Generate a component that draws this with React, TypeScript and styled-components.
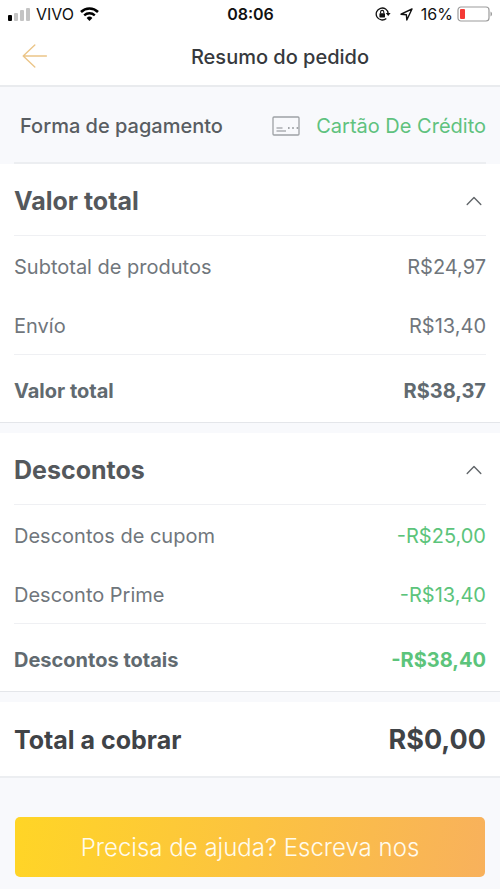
import React, { useState } from "react";
import styled, { createGlobalStyle } from "styled-components";

const GlobalStyle = createGlobalStyle`
  *, *::before, *::after { box-sizing: border-box; }
  body {
    margin: 0;
    background: #f8f9fc;
    color: #5f666c;
    font-family: Inter, "Liberation Sans", sans-serif;
  }
  button { font: inherit; color: inherit; }
  h1, h2, dl, dt, dd { margin: 0; font: inherit; }
`;

const Page = styled.div`
  display: flex;
  flex-direction: column;
  min-height: 100vh;
`;

const StatusBar = styled.div`
  display: grid;
  grid-template-columns: 1fr auto 1fr;
  align-items: center;
  height: 28px;
  padding: 0 7px 0 8px;
  background: #fff;
  color: #111;
  font-size: 16px;
  line-height: 20px;
`;

const StatusGroup = styled.div<{ $end?: boolean }>`
  display: flex;
  align-items: center;
  justify-content: ${(p) => (p.$end ? "flex-end" : "flex-start")};
  gap: ${(p) => (p.$end ? 4 : 6)}px;
  svg { flex: none; }
`;

const Clock = styled.time`
  font-weight: 600;
`;

const StatusIcons = styled.span`
  display: flex;
  align-items: center;
  gap: 9px;
  margin-right: 4px;
`;

const Header = styled.header`
  display: grid;
  grid-template-columns: 60px 1fr;
  align-items: center;
  height: 59px;
  background: #fff;
  border-bottom: 2px solid #e9ebee;
`;

const BackButton = styled.button`
  display: flex;
  justify-content: flex-end;
  padding: 0 12px 2px 0;
  border: 0;
  background: none;
  cursor: pointer;
`;

const PageTitle = styled.h1`
  text-align: center;
  color: #36393d;
  font-size: 20px;
  font-weight: 500;
  line-height: 28px;
`;

const Payment = styled.section`
  display: flex;
  align-items: center;
  justify-content: space-between;
  height: 77px;
  margin: 0 14px;
  padding: 2px 0 0 6px;
  border-bottom: 2px solid #eceef1;
  font-size: 20px;
  line-height: 28px;
`;

const PaymentLabel = styled.h2`
  color: #585d62;
  font-weight: 500;
`;

const PaymentMethod = styled.div`
  display: flex;
  align-items: center;
  gap: 16px;
  color: #5fc27e;
`;

const Panel = styled.section`
  padding: 0 14px;
  background: #fff;
  border-bottom: 1px solid #e4e6ea;
  & + & { margin-top: 10px; }
`;

const PanelToggle = styled.button`
  display: flex;
  align-items: center;
  justify-content: space-between;
  width: 100%;
  height: 71px;
  padding: 2px 4px 0 0;
  border: 0;
  background: none;
  color: #54585c;
  font-size: 25px;
  font-weight: 700;
  line-height: 32px;
  cursor: pointer;
`;

const Chevron = styled.svg<{ $open: boolean }>`
  rotate: ${(p) => (p.$open ? "0deg" : "180deg")};
`;

const Lines = styled.dl`
  border-top: 1px solid #eff0f3;
`;

const Line = styled.div<{ $total?: boolean }>`
  display: flex;
  align-items: center;
  justify-content: space-between;
  height: ${(p) => (p.$total ? 68 : 59)}px;
  padding-top: ${(p) => (p.$total ? 4 : 2)}px;
  border-top: ${(p) => (p.$total ? "1px solid #eff0f3" : "0")};
  color: ${(p) => (p.$total ? "#616a70" : "#70767c")};
  font-size: 20px;
  font-weight: ${(p) => (p.$total ? 700 : 400)};
  line-height: 28px;
`;

const Amount = styled.dd<{ $discount?: boolean }>`
  color: ${(p) => (p.$discount ? "#5cc47b" : "inherit")};
`;

const Charge = styled.dl`
  display: flex;
  align-items: center;
  justify-content: space-between;
  height: 76px;
  margin-top: 10px;
  padding: 2px 14px 0;
  background: #fff;
  border-bottom: 2px solid #eceef1;
  color: #404347;
  font-size: 25px;
  font-weight: 700;
  line-height: 32px;
`;

const ChargeAmount = styled.dd`
  font-size: 27px;
`;

const Footer = styled.footer`
  padding: 39px 15px 12px;
`;

const HelpButton = styled.button`
  display: block;
  width: 100%;
  height: 60px;
  border: 0;
  border-radius: 5px;
  background: linear-gradient(100deg, #ffd526 0%, #fcc340 50%, #f8b15c 100%);
  color: #fffbed;
  font-size: 24px;
  font-weight: 300;
  cursor: pointer;
`;

type Entry = { label: string; value: string };

type SummaryProps = {
  title: string;
  entries: Entry[];
  total: Entry;
  discount?: boolean;
};

function Summary({ title, entries, total, discount }: SummaryProps) {
  const [open, setOpen] = useState(true);
  return (
    <Panel>
      <h2>
        <PanelToggle aria-expanded={open} onClick={() => setOpen(!open)}>
          {title}
          <Chevron $open={open} width="16" height="10" viewBox="0 0 16 10" fill="none" aria-hidden="true">
            <path d="M1.2 8.6 8 1.6l6.8 7" stroke="#62666a" strokeWidth="1.4" strokeLinecap="round" strokeLinejoin="round" />
          </Chevron>
        </PanelToggle>
      </h2>
      {open && (
        <Lines>
          {entries.map((e) => (
            <Line key={e.label}>
              <dt>{e.label}</dt>
              <Amount $discount={discount}>{e.value}</Amount>
            </Line>
          ))}
          <Line $total>
            <dt>{total.label}</dt>
            <Amount $discount={discount}>{total.value}</Amount>
          </Line>
        </Lines>
      )}
    </Panel>
  );
}

function Signal() {
  return (
    <svg width="22" height="14" viewBox="0 0 22 14" aria-hidden="true">
      <rect x="0" y="8" width="4" height="6" rx="1" fill="#000" />
      <rect x="6" y="6" width="4" height="8" rx="1" fill="#c4c4c4" />
      <rect x="12" y="3" width="4" height="11" rx="1" fill="#c4c4c4" />
      <rect x="18" y="1" width="4" height="13" rx="1" fill="#c4c4c4" />
    </svg>
  );
}

function Wifi() {
  return (
    <svg width="19" height="14" viewBox="0 0 19 14" fill="none" stroke="#000" aria-hidden="true">
      <path d="M1 5a12.2 12.2 0 0 1 17 0" strokeWidth="2.6" />
      <path d="M4.2 8.4a7.6 7.6 0 0 1 10.6 0" strokeWidth="2.3" />
      <path d="M9.5 14 6.6 11a4.2 4.2 0 0 1 5.8 0z" fill="#000" stroke="none" />
    </svg>
  );
}

function RotationLock() {
  return (
    <svg width="16" height="14" viewBox="0 0 16 14" fill="none" stroke="#111" aria-hidden="true">
      <path d="M13.2 6.6A6 6 0 1 0 11.3 11.4" strokeWidth="1.3" />
      <path d="M10.8 6h4.8l-2.4 3z" fill="#111" stroke="none" />
      <rect x="4.4" y="6.2" width="5.6" height="4.2" rx=".6" fill="#111" stroke="none" />
      <path d="M5.6 6.4V5a1.6 1.6 0 0 1 3.2 0v1.4" strokeWidth="1.1" />
    </svg>
  );
}

function Location() {
  return (
    <svg width="13" height="13" viewBox="0 0 13 13" fill="none" aria-hidden="true">
      <path d="M12 1 1 6.2l5.4.5.4 5.3z" stroke="#111" strokeWidth="1.4" strokeLinejoin="round" />
    </svg>
  );
}

function Battery() {
  return (
    <svg width="36" height="16" viewBox="0 0 36 16" fill="none" aria-hidden="true">
      <rect x="1" y="1" width="31" height="14" rx="3" stroke="#9b9b9b" strokeWidth="1.2" />
      <rect x="3" y="3" width="5" height="10" rx="1" fill="#f43a36" />
      <path d="M33.5 5.5c2 .8 2 4.2 0 5z" fill="#9b9b9b" />
    </svg>
  );
}

export default function App() {
  return (
    <>
      <GlobalStyle />
      <Page>
        <StatusBar>
          <StatusGroup>
            <Signal />
            <span>VIVO</span>
            <Wifi />
          </StatusGroup>
          <Clock>08:06</Clock>
          <StatusGroup $end>
            <StatusIcons>
              <RotationLock />
              <Location />
            </StatusIcons>
            <span>16%</span>
            <Battery />
          </StatusGroup>
        </StatusBar>
        <Header>
          <BackButton aria-label="Voltar">
            <svg width="26" height="24" viewBox="0 0 26 24" fill="none" aria-hidden="true">
              <path d="M12.8 1 1.2 12l11.6 11M1.2 12H24.4" stroke="#ebc588" strokeWidth="1.4" strokeLinecap="round" strokeLinejoin="round" />
            </svg>
          </BackButton>
          <PageTitle>Resumo do pedido</PageTitle>
        </Header>
        <main>
          <Payment>
            <PaymentLabel>Forma de pagamento</PaymentLabel>
            <PaymentMethod>
              <svg width="28" height="20" viewBox="0 0 28 20" fill="none" aria-hidden="true">
                <rect x="1" y="1" width="26" height="18" rx="1" stroke="#9da1a5" strokeWidth="1.3" />
                <path d="M4.5 12h6M4.5 15h9.5" stroke="#85898d" strokeWidth="1.1" />
                <path d="M16 12h1.6M20.2 12h1.6M24.6 12h1.6" stroke="#85898d" strokeWidth="1.3" />
              </svg>
              <span>Cartão De Crédito</span>
            </PaymentMethod>
          </Payment>
          <Summary
            title="Valor total"
            entries={[
              { label: "Subtotal de produtos", value: "R$24,97" },
              { label: "Envío", value: "R$13,40" },
            ]}
            total={{ label: "Valor total", value: "R$38,37" }}
          />
          <Summary
            title="Descontos"
            discount
            entries={[
              { label: "Descontos de cupom", value: "-R$25,00" },
              { label: "Desconto Prime", value: "-R$13,40" },
            ]}
            total={{ label: "Descontos totais", value: "-R$38,40" }}
          />
          <Charge>
            <dt>Total a cobrar</dt>
            <ChargeAmount>R$0,00</ChargeAmount>
          </Charge>
        </main>
        <Footer>
          <HelpButton>Precisa de ajuda? Escreva nos</HelpButton>
        </Footer>
      </Page>
    </>
  );
}
